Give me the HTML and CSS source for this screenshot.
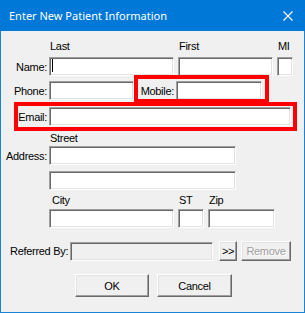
FILE: index.html
```html
<!DOCTYPE html>
<html lang="en">
<head>
    <meta charset="UTF-8">
    <title>Enter New Patient Information</title>
    <link rel="stylesheet" href="styles.css">
</head>
<body>
    <div class="window">
        <div class="titlebar">
            <span class="title">Enter New Patient Information</span>
            <svg class="close" width="10" height="10" viewBox="0 0 10 10">
                <path d="M0.5 0.5 L9.5 9.5 M9.5 0.5 L0.5 9.5" stroke="#fff" stroke-width="1.1" fill="none"/>
            </svg>
        </div>

        <div class="content">
            <div class="caps caps-name">
                <span class="cap w-last">Last</span>
                <span class="cap w-first">First</span>
                <span class="cap w-mi">MI</span>
            </div>
            <div class="row row-name">
                <label class="lbl">Name:</label>
                <div class="field w-last"><span class="caret"></span></div>
                <div class="field w-first"></div>
                <div class="field w-mi"></div>
            </div>

            <div class="row row-phone">
                <label class="lbl">Phone:</label>
                <div class="field w-phone"></div>
                <label class="lbl-mobile">Mobile:</label>
                <div class="field w-mobile"></div>
            </div>

            <div class="row row-email">
                <label class="lbl">Email:</label>
                <div class="field w-email"></div>
            </div>

            <div class="caps caps-street">
                <span class="cap">Street</span>
            </div>
            <div class="row row-addr1">
                <label class="lbl">Address:</label>
                <div class="field w-addr"></div>
            </div>
            <div class="row row-addr2">
                <span class="lbl"></span>
                <div class="field w-addr"></div>
            </div>

            <div class="caps caps-city">
                <span class="cap w-city cap-city">City</span>
                <span class="cap w-st">ST</span>
                <span class="cap w-zip">Zip</span>
            </div>
            <div class="row row-city">
                <span class="lbl"></span>
                <div class="field w-city"></div>
                <div class="field w-st"></div>
                <div class="field w-zip"></div>
            </div>

            <div class="row row-ref">
                <label class="lbl-ref">Referred By:</label>
                <div class="field disabled w-ref"></div>
                <button class="btn btn-more">&gt;&gt;</button>
                <button class="btn btn-remove" disabled>Remove</button>
            </div>

            <div class="actions">
                <button class="btn btn-ok">OK</button>
                <button class="btn btn-cancel">Cancel</button>
            </div>
        </div>

        <!-- highlight boxes drawn over the form -->
        <div class="hl hl-mobile"></div>
        <div class="hl hl-email"></div>
    </div>
</body>
</html>
```

FILE: styles.css
```css
body {
    margin: 0;
    background-color: #ffffff;
    font-family: "Liberation Sans", Arial, sans-serif;
    font-size: 11px;
    letter-spacing: -0.3px;
    color: #000;
}
.window {
    position: relative;
    width: 305px;
    height: 313px;
    box-sizing: border-box;
    background-color: #f0f0f0;
    border: 1px solid #1883d7;
    border-top: none;
}
.titlebar {
    height: 31px;
    margin: 0 -1px;
    background-color: #0078d7;
    color: #fff;
    display: flex;
    align-items: center;
    justify-content: space-between;
    padding: 0 12px 0 9px;
    font-family: "Noto Sans", "DejaVu Sans", sans-serif;
    font-size: 11px;
    letter-spacing: 0;
}
.close { display: block; }

.content { padding-top: 9px; }

.caps {
    display: flex;
    height: 13px;
    line-height: 13px;
    padding-left: 48px;
    gap: 4px;
}
.cap { padding-left: 1px; box-sizing: border-box; }
.caps-street { padding-left: 49px; }
.caps-street .cap { padding-left: 0; }
.caps-city { margin-top: 4px; }
.cap-city { padding-left: 3px; }

.row {
    display: flex;
    align-items: center;
    gap: 4px;
}
.lbl {
    width: 46px;
    margin-right: -4px;
    padding-right: 2px;
    text-align: right;
    white-space: nowrap;
}
.row-name { margin-top: 4px; }
.row-phone { margin-top: 5px; }
.row-email { margin-top: 7px; }
.caps-street { margin-top: 6px; }
.row-addr1 { margin-top: 1px; }
.row-addr2 { margin-top: 6px; }
.row-city { margin-top: 2px; }

.field {
    box-sizing: border-box;
    height: 19px;
    background-color: #fff;
    border: 1px solid;
    border-color: #a0a0a0 #ffffff #ffffff #a0a0a0;
    box-shadow: inset 1px 1px #696969, inset -1px -1px #e3e3e3;
    position: relative;
}
.field.disabled { background-color: #f0f0f0; }
.caret {
    display: block;
    width: 1px;
    height: 13px;
    margin: 1px 0 0 2px;
    background-color: #000;
}

.w-last { width: 125px; }
.w-first { width: 95px; }
.w-mi { width: 16px; }
.w-phone { width: 85px; }
.w-mobile { width: 86px; }
.w-email { width: 242px; }
.w-addr { width: 187px; }
.w-city { width: 125px; }
.w-st { width: 26px; }
.w-zip { width: 67px; }
.w-ref { width: 143px; }

.lbl-mobile {
    width: 42px;
    margin-left: -4px;
    margin-right: -4px;
    padding-right: 2px;
    box-sizing: border-box;
    text-align: right;
    white-space: nowrap;
}

.row-ref {
    margin-top: 13px;
    padding-left: 9px;
    gap: 0;
}
.lbl-ref { width: 60px; white-space: nowrap; }

.btn {
    box-sizing: border-box;
    background-color: #f0f0f0;
    border: 1px solid;
    border-color: #ffffff #696969 #696969 #ffffff;
    box-shadow: inset -1px -1px #a0a0a0, inset 1px 1px #e3e3e3;
    font-family: "Liberation Sans", Arial, sans-serif;
    font-size: 11px;
    letter-spacing: -0.3px;
    color: #000;
    padding: 0;
}
.btn-more { width: 18px; height: 20px; margin-left: 6px; }
.btn-remove {
    width: 50px;
    height: 20px;
    margin-left: 4px;
    color: #a0a0a0;
    text-shadow: 1px 1px #fff;
}

.actions {
    display: flex;
    gap: 8px;
    margin-top: 13px;
    padding-left: 74px;
}
.btn-ok { width: 74px; height: 23px; }
.btn-cancel { width: 75px; height: 23px; }

.hl {
    position: absolute;
    box-sizing: border-box;
    border: 4px solid #ff0000;
}
.hl-mobile { left: 133px; top: 75px; width: 135px; height: 28px; }
.hl-email { left: 13px; top: 102px; width: 283px; height: 29px; }
```
